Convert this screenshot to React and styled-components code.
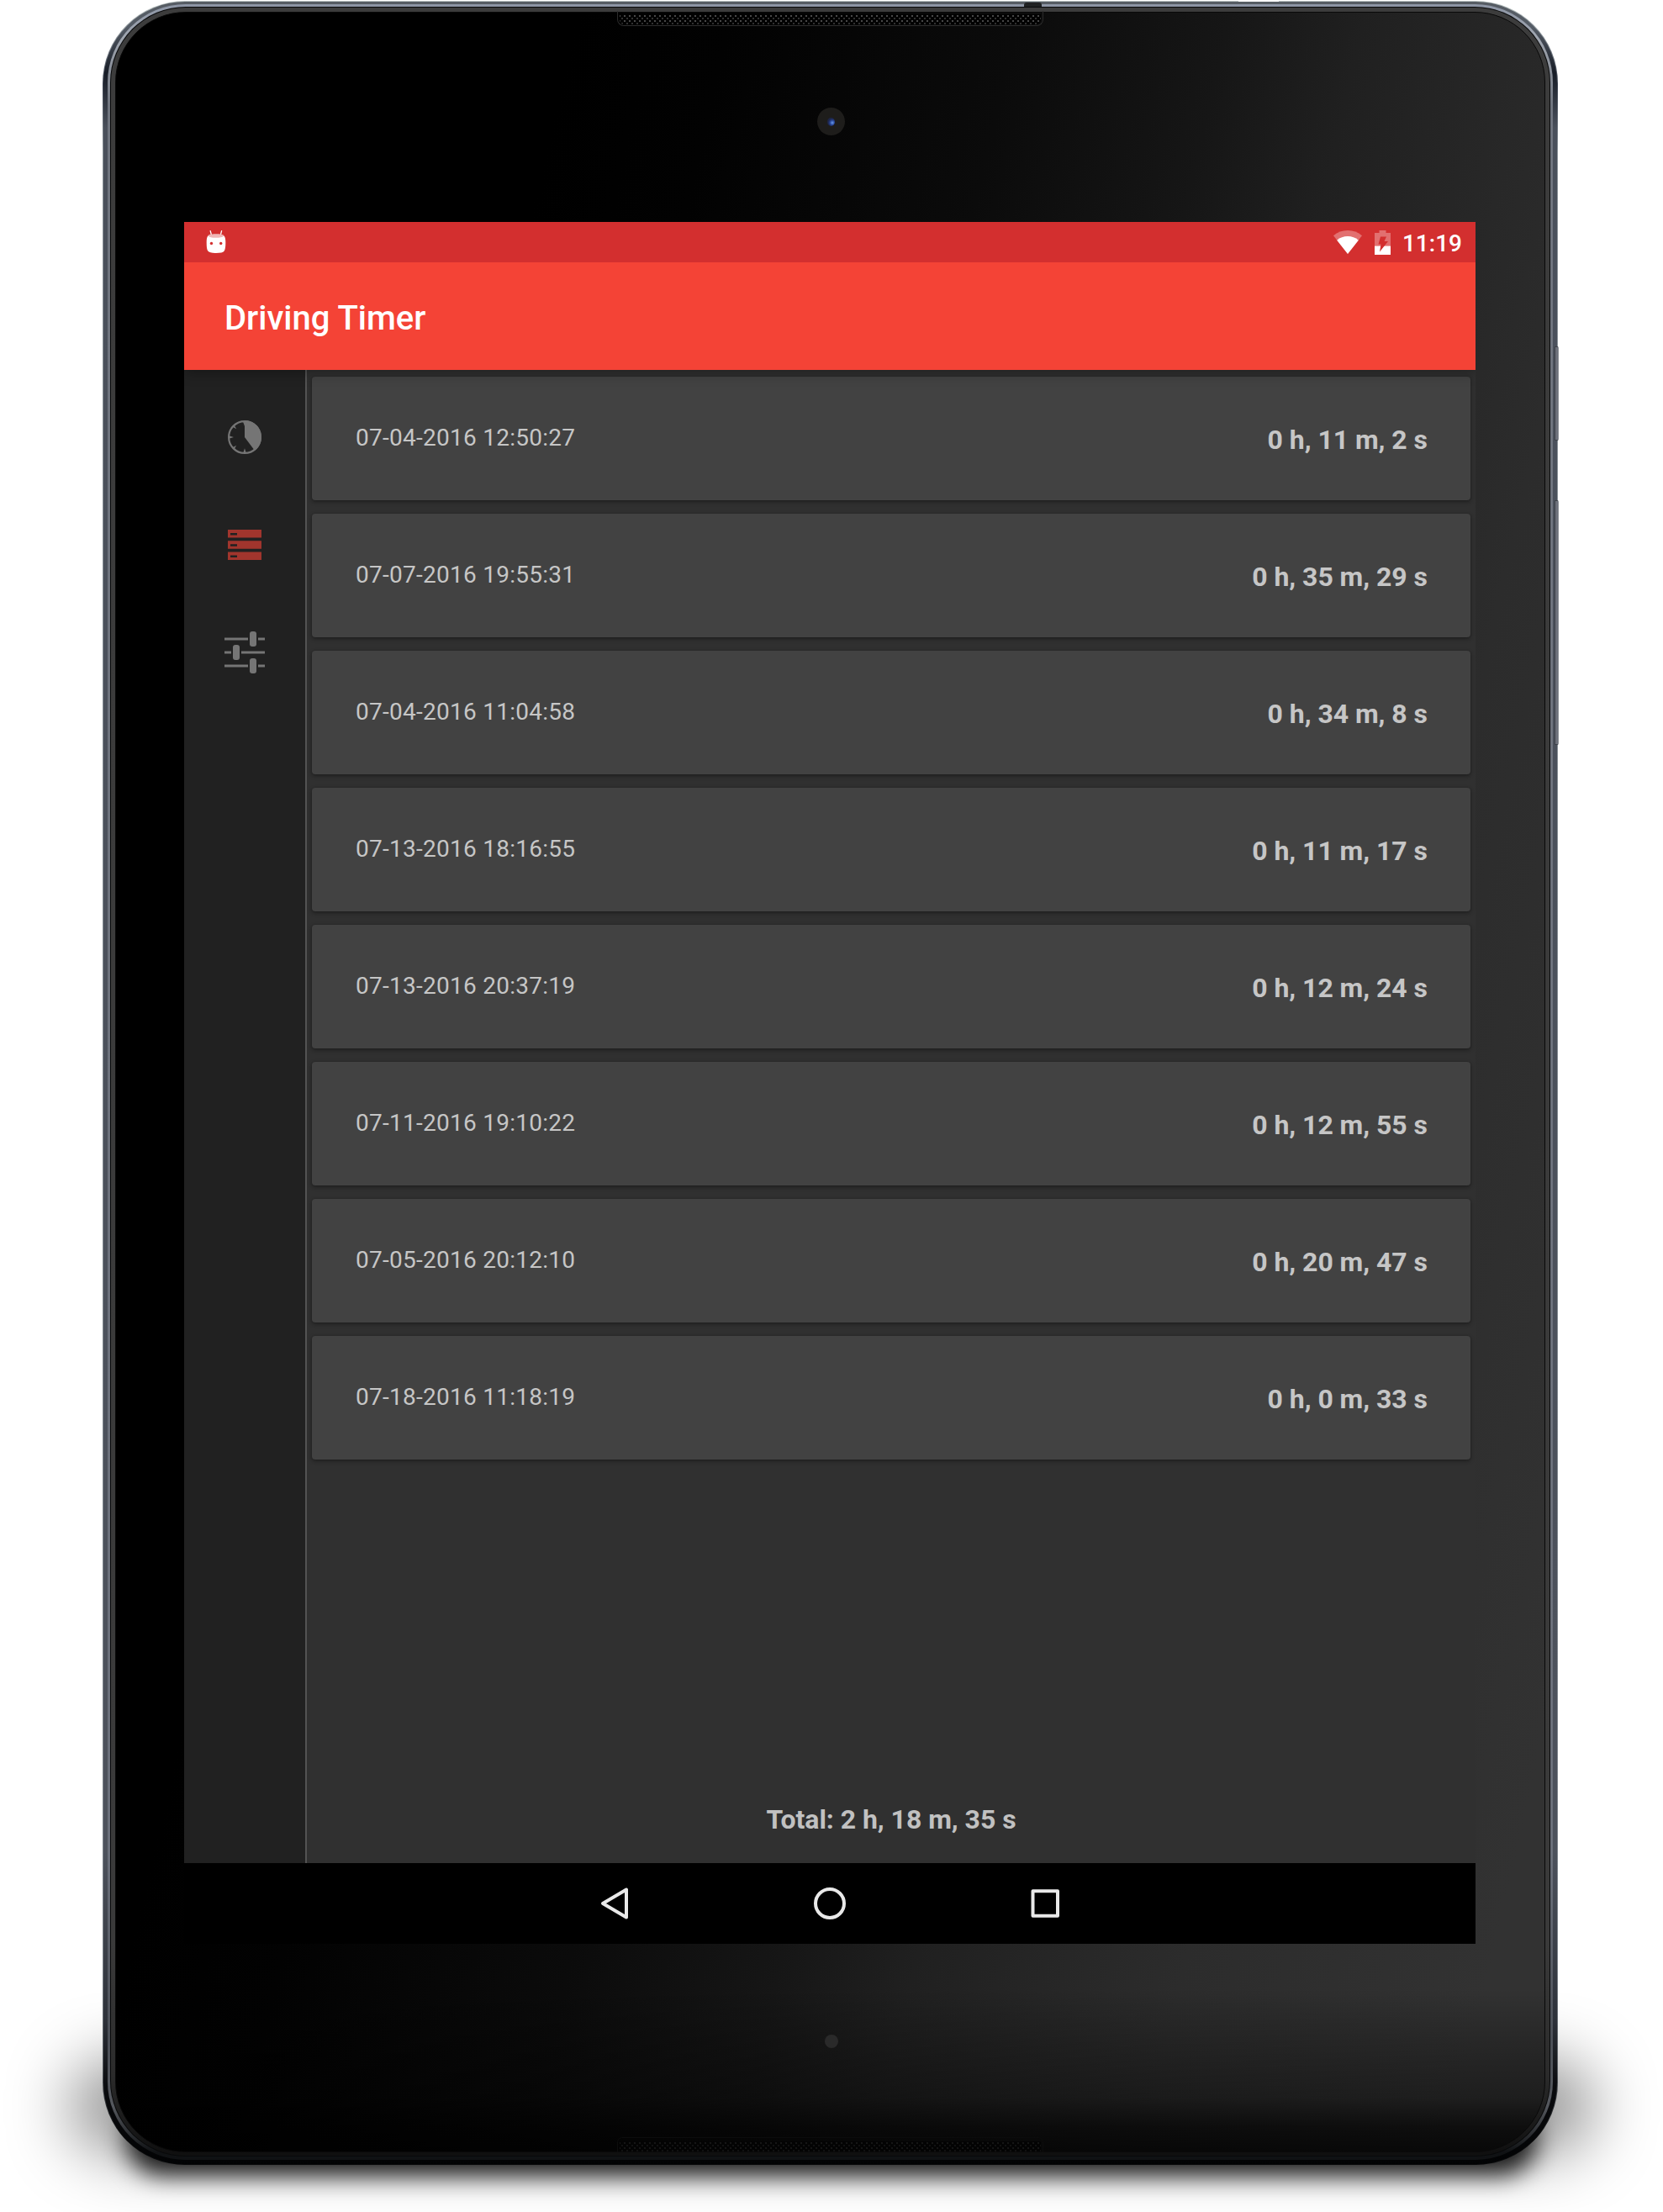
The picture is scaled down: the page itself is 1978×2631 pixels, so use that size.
import React from 'react';
import styled, { createGlobalStyle, css } from 'styled-components';

const GlobalStyle = createGlobalStyle`
  *, *::before, *::after { box-sizing: border-box; }
  body { margin: 0; background: #fff; font-family: Roboto, "Liberation Sans", sans-serif; }
`;

const Page = styled.main`
  position: relative;
  display: flex;
  justify-content: flex-start;
  align-items: flex-start;
  width: 1978px;
  height: 2631px;
  padding: 1px 0 0 122px;
  overflow: hidden;
  background: #fff;
`;

/* ---------- device ---------- */
const Shadow = styled.div`
  position: absolute;
  left: ${p => p.$x}px;
  top: ${p => p.$y}px;
  width: ${p => p.$w}px;
  height: ${p => p.$h}px;
  border-radius: ${p => p.$r}px;
  background: rgba(0, 0, 0, ${p => p.$alpha});
  filter: blur(${p => p.$blur}px);
`;

const Device = styled.div`
  position: relative;
  width: 1731px;
  height: 2574px;
  padding: 1px;
  border-radius: 98px;
  background: linear-gradient(#b9c2c1 0, #8e969c 40px, #3b4250 100px, #8a9299 180px, #7b828a 2330px, #555a60 2460px, #08090a 2540px);
`;

const Shell = styled.div`
  height: 100%;
  padding: 3px 5px 5px;
  border-radius: 97px;
  background: linear-gradient(#565c63 0, #555c66 30px, #171c26 85px, #4a505b 150px, #4d525c 2200px, #2e323a 2400px, #0a0b0e 2480px, #020304 2572px);
`;

const Rim = styled.div`
  height: 100%;
  padding: 3px 3px 4px;
  border-radius: 93px;
  background: linear-gradient(#8d95a5 0, #a0a6b0 40px, #70757f 120px, #6b707b 2200px, #4c5058 2420px, #55585e 2500px, #101214 2555px);
`;

const Seam = styled.div`
  height: 100%;
  padding: 1px;
  border-radius: 90px;
  background: #08090a;
`;

const Bezel = styled.div`
  height: 100%;
  padding: 5px 5px 4px;
  border-radius: 89px;
  background: linear-gradient(#3c3c3c 0, #3a3a3a 2300px, #2b2b2b 2460px, #101010 2550px);
`;

const Glass = styled.div`
  position: relative;
  height: 100%;
  padding: 249px 81px 0 81px;
  border: 1px solid #090909;
  border-radius: 84px;
  background:
    linear-gradient(transparent 2350px, rgba(0, 0, 0, 0.2) 2410px, rgba(0, 0, 0, 0.4) 2480px, rgba(0, 0, 0, 0.72) 2515px, rgba(0, 0, 0, 0.84) 2546px),
    linear-gradient(103deg, #000 24%, #020202 32%, #0b0b0b 47%, #161616 58%, #202020 65%, #282828 74%, #2c2c2c 79%, #323232 95%);
`;

const Speaker = styled.div`
  position: absolute;
  left: 596px;
  ${p => p.$bottom ? css`bottom: -1px;` : css`top: -2px;`}
  width: 507px;
  height: 18px;
  border: 1px solid ${p => p.$bottom ? '#0c0c0c' : '#2c2c2c'};
  ${p => p.$bottom
    ? css`border-bottom: 0; border-radius: 6px 6px 0 0;`
    : css`border-top: 0; border-radius: 0 0 8px 8px;`}
  background:
    radial-gradient(circle at 2px 2px, ${p => p.$bottom ? '#151515' : '#484848'} 0.8px, transparent 1.6px) 0 4px / 6px 6px,
    radial-gradient(circle at 5px 5px, ${p => p.$bottom ? '#111' : '#303030'} 0.8px, transparent 1.6px) 0 4px / 6px 6px,
    ${p => p.$bottom ? '#030303' : '#000'};
  background-clip: content-box;
  padding: 4px 2px 1px;
`;

const Camera = styled.div`
  position: absolute;
  left: 834px;
  top: 113px;
  display: flex;
  align-items: center;
  justify-content: center;
  width: 33px;
  height: 33px;
  border-radius: 50%;
  background: #1e1d1b;
`;

const Lens = styled.div`
  width: 9px;
  height: 10px;
  border-radius: 50%;
  background: radial-gradient(circle at 6px 6px, #6f9de8 0, #3b62b8 1.8px, #25408c 3px, #1d2549 5px);
`;

const Sensor = styled.div`
  position: absolute;
  left: 843px;
  top: 2405px;
  width: 16px;
  height: 16px;
  border-radius: 50%;
  background: #2a2a2a;
`;

const SideKey = styled.div`
  position: absolute;
  right: -1px;
  top: ${p => p.$top}px;
  width: 5px;
  height: ${p => p.$height}px;
  border: 1px solid #3d4148;
  border-right-color: #8a8e95;
  border-radius: 0 2px 2px 0;
  background: #6d717b;
`;

const Microphone = styled.div`
  position: absolute;
  left: 1096px;
  top: 2px;
  width: 21px;
  height: 5px;
  border-radius: 3px 3px 0 0;
  background: #1f2122;
`;

const TopKey = styled.div`
  position: absolute;
  left: 1351px;
  top: -1px;
  width: 48px;
  height: 2px;
  background: #fff;
`;

/* ---------- screen ---------- */
const Screen = styled.div`
  display: flex;
  flex-direction: column;
  width: 1536px;
  height: 2048px;
  overflow: hidden;
  background: #303030;
`;

const StatusBar = styled.header`
  display: flex;
  flex: none;
  align-items: center;
  height: 48px;
  padding: 0 16px 0 26px;
  background: #d32f2f;
  color: #fff;
`;

const StatusIcons = styled.div`
  display: flex;
  align-items: center;
  margin-left: auto;
`;

const StatusSvg = styled.svg`
  display: block;
  flex: none;
  margin-right: ${p => p.$gap || 0}px;
`;

const Clock = styled.span`
  font-size: 28px;
  font-weight: 500;
  line-height: 33px;
  padding-top: 2px;
`;

const Toolbar = styled.div`
  position: relative;
  z-index: 1;
  display: flex;
  flex: none;
  align-items: center;
  height: 128px;
  padding: 4px 48px 0;
  background: #f44336;
  box-shadow: 0 4px 14px rgba(0, 0, 0, 0.3);
  clip-path: inset(0 0 -30px 0);
`;

const Title = styled.h1`
  margin: 0;
  color: #fff;
  font-size: 40px;
  font-weight: 500;
  line-height: 47px;
`;

const Body = styled.div`
  display: flex;
  flex: 1;
  min-height: 0;
`;

const Sidebar = styled.nav`
  display: flex;
  flex: none;
  flex-direction: column;
  width: 146px;
  padding-top: 16px;
  border-right: 2px solid #535353;
  background: #212121;
`;

const SideItem = styled.div`
  display: flex;
  align-items: center;
  justify-content: center;
  height: 128px;
  color: ${p => p.$active ? '#a1352d' : '#757575'};
`;

const Content = styled.section`
  display: flex;
  flex: 1;
  flex-direction: column;
  padding: 8px 6px 0;
`;

const List = styled.div`
  display: flex;
  flex-direction: column;
  gap: 16px;
`;

const Card = styled.article`
  display: flex;
  align-items: flex-start;
  justify-content: space-between;
  height: 147px;
  padding: 56px 51px 0 52px;
  border-radius: 4px;
  background: #424242;
  box-shadow: 0 2px 5px rgba(0, 0, 0, 0.36), 0 0 2px rgba(0, 0, 0, 0.2);
  color: #c6c6c6;
`;

const Started = styled.time`
  font-size: 28px;
  line-height: 33px;
  letter-spacing: 0.26px;
`;

const Duration = styled.strong`
  font-size: 32px;
  font-weight: 700;
  line-height: 38px;
  letter-spacing: -0.04px;
`;

const Total = styled.div`
  margin-top: auto;
  padding-bottom: 33px;
  color: #c1c1c1;
  font-size: 32px;
  font-weight: 700;
  line-height: 38px;
  letter-spacing: -0.04px;
  text-align: center;
`;

const NavBar = styled.footer`
  display: flex;
  flex: none;
  align-items: center;
  justify-content: center;
  height: 96px;
  background: #000;
`;

const NavButton = styled.div`
  display: flex;
  align-items: center;
  justify-content: center;
  width: 256px;
  height: 96px;
`;

/* ---------- icons ---------- */
const DebugIcon = () => (
  <StatusSvg width="24" height="30" viewBox="0 0 24 30">
    <path d="M5.2 1.6 6.6 7M18.6 1.6 17.2 7" stroke="#fff" strokeWidth="1.3" strokeLinecap="round" />
    <path d="M2.4 7.200C3.500 4.600 20.300 4.600 21.400 7.200L20 10.500H4z" fill="#f0b6b6" />
    <path d="M2.400 7.400c2.600 3.200 16.400 3.200 19 0C23 9 23.400 12 23.300 16.500c0 4-.4 7.300-1.600 9C20.500 27.300 17 28 12 28s-8.500-.7-9.700-2.500C1 23.800.7 20.500.7 16.500.6 12 .9 9 2.400 7.400z" fill="#fff" />
    <circle cx="6.500" cy="16.500" r="1.700" fill="#d32f2f" />
    <circle cx="17.700" cy="16.500" r="1.700" fill="#d32f2f" />
  </StatusSvg>
);

const WifiIcon = () => (
  <StatusSvg $gap={15} width="34" height="28" viewBox="0 0 34 28">
    <path d="M17 28 0 6.300C4.800 2.200 10.600 0 17 0s12.200 2.200 17 6.300z" fill="#e27070" />
    <path d="M17 28 4.200 11.700C7.900 8.700 12.200 7.100 17 7.100s9.100 1.600 12.800 4.600z" fill="#fff" />
  </StatusSvg>
);

const BatteryIcon = () => (
  <StatusSvg $gap={14} width="19" height="29" viewBox="0 0 19 29">
    <path d="M5.500 0h8v3H19v15.500H0V3h5.500z" fill="#e27070" />
    <path d="M0 18.500h19V29H0z" fill="#fff" />
    <path d="M7 7.500h7L11.500 13H16L6 25.500 7.500 16.500H4.500z" fill="#d32f2f" />
  </StatusSvg>
);

const TimerIcon = () => (
  <svg width="40" height="40" viewBox="0 0 40 40">
    <circle cx="20" cy="20" r="18.900" fill="none" stroke="currentColor" strokeWidth="2.200" />
    <path d="M20 20V0a20 20 0 0 1 12 36z" fill="currentColor" />
    <path d="M20 7 18 1.500h3zM2 18.400 7 20l-5 1.600zM18.500 38 20 33.200 21.500 38zM5.200 7.400 7.400 5.200 10.200 10.200zM5.200 32.600 10.200 29.800 7.400 34.800z" fill="currentColor" />
  </svg>
);

const StorageIcon = () => (
  <svg width="40" height="36" viewBox="0 0 40 36">
    {[0, 13.2, 26.4].map(y => (
      <path key={y} fillRule="evenodd" fill="currentColor" d={`M0 ${y}h40v9.600H0zM3 ${y + 4}v2.500h8v-2.500z`} />
    ))}
  </svg>
);

const TuneIcon = () => (
  <svg width="48" height="50" viewBox="0 0 48 50">
    <path d="M0 9h28M40 9h8M0 25h8M20 25h28M0 41h28M40 41h8" stroke="currentColor" strokeWidth="3" />
    <g fill="currentColor">
      <rect x="30" y="0" width="8" height="18" rx="3" />
      <rect x="10" y="16" width="8" height="18" rx="3" />
      <rect x="30" y="32" width="8" height="18" rx="3" />
    </g>
  </svg>
);

const NavGlyph = ({ children }) => (
  <svg width="44" height="44" viewBox="0 0 44 44" fill="none" stroke="#e9e9e9" strokeWidth="4" strokeLinejoin="round">
    {children}
  </svg>
);

const drives = [
  ['07-04-2016 12:50:27', '0 h, 11 m, 2 s'],
  ['07-07-2016 19:55:31', '0 h, 35 m, 29 s'],
  ['07-04-2016 11:04:58', '0 h, 34 m, 8 s'],
  ['07-13-2016 18:16:55', '0 h, 11 m, 17 s'],
  ['07-13-2016 20:37:19', '0 h, 12 m, 24 s'],
  ['07-11-2016 19:10:22', '0 h, 12 m, 55 s'],
  ['07-05-2016 20:12:10', '0 h, 20 m, 47 s'],
  ['07-18-2016 11:18:19', '0 h, 0 m, 33 s'],
];

export default function App() {
  return (
    <Page>
      <GlobalStyle />
      <Shadow $x={82} $y={2450} $w={1814} $h={112} $r={56} $alpha={0.42} $blur={38} />
      <Shadow $x={150} $y={2500} $w={1678} $h={88} $r={44} $alpha={0.86} $blur={14} />
      <Device>
        <SideKey $top={411} $height={112} />
        <SideKey $top={594} $height={291} />
        <TopKey />
        <Microphone />
        <Shell>
          <Rim>
            <Seam>
              <Bezel>
                <Glass>
                  <Speaker />
                  <Camera><Lens /></Camera>
                  <Screen>
                    <StatusBar>
                      <DebugIcon />
                      <StatusIcons>
                        <WifiIcon />
                        <BatteryIcon />
                        <Clock>11:19</Clock>
                      </StatusIcons>
                    </StatusBar>
                    <Toolbar><Title>Driving Timer</Title></Toolbar>
                    <Body>
                      <Sidebar>
                        <SideItem><TimerIcon /></SideItem>
                        <SideItem $active><StorageIcon /></SideItem>
                        <SideItem><TuneIcon /></SideItem>
                      </Sidebar>
                      <Content>
                        <List>
                          {drives.map(([started, duration]) => (
                            <Card key={started}>
                              <Started>{started}</Started>
                              <Duration>{duration}</Duration>
                            </Card>
                          ))}
                        </List>
                        <Total>Total: 2 h, 18 m, 35 s</Total>
                      </Content>
                    </Body>
                    <NavBar>
                      <NavButton><NavGlyph><path d="M36 5.500v33L8 22z" /></NavGlyph></NavButton>
                      <NavButton><NavGlyph><circle cx="22" cy="22" r="17" /></NavGlyph></NavButton>
                      <NavButton><NavGlyph><rect x="7.500" y="7.200" width="29.500" height="29.500" /></NavGlyph></NavButton>
                    </NavBar>
                  </Screen>
                  <Sensor />
                  <Speaker $bottom />
                </Glass>
              </Bezel>
            </Seam>
          </Rim>
        </Shell>
      </Device>
    </Page>
  );
}
